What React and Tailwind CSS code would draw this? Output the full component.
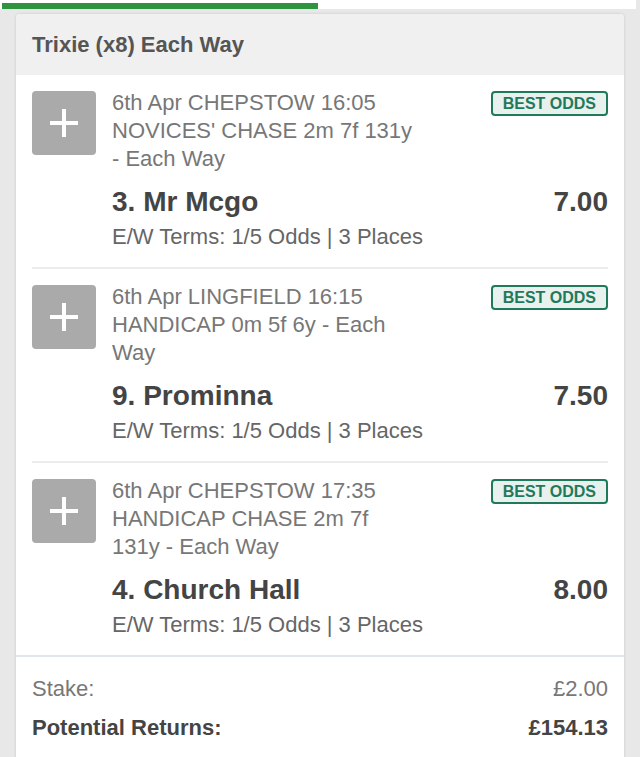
const bets = [
  {
    event: "6th Apr CHEPSTOW 16:05 NOVICES' CHASE 2m 7f 131y - Each Way",
    name: "3. Mr Mcgo",
    odds: "7.00",
  },
  {
    event: "6th Apr LINGFIELD 16:15 HANDICAP 0m 5f 6y - Each Way",
    name: "9. Prominna",
    odds: "7.50",
  },
  {
    event: "6th Apr CHEPSTOW 17:35 HANDICAP CHASE 2m 7f 131y - Each Way",
    name: "4. Church Hall",
    odds: "8.00",
  },
];

function PlusIcon() {
  return (
    <svg width="30" height="30" viewBox="0 0 30 30">
      <rect x="13" y="1" width="4" height="28" fill="#ffffff" />
      <rect x="1" y="13" width="28" height="4" fill="#ffffff" />
    </svg>
  );
}

function BetRow({ bet, last }) {
  return (
    <div className={`flex gap-4 pt-4 pb-[16px] ${last ? "" : "border-b-2 border-[#ececec]"}`}>
      <div className="w-16 h-16 shrink-0 rounded bg-[#aaaaaa] flex items-center justify-center">
        <PlusIcon />
      </div>
      <div className="flex-1 min-w-0">
        <div className="flex items-start justify-between -mt-[2px]">
          <p className="w-[302px] text-[22px] leading-[28px] text-[#777777]">{bet.event}</p>
          <span className="mt-[2px] shrink-0 border-2 border-[#1f7a5c] bg-[#e8f1ee] rounded text-[#1f7a5c] font-bold text-[16px] leading-[21px] px-[10px]">
            BEST ODDS
          </span>
        </div>
        <div className="flex items-center justify-between mt-[12px]">
          <span className="text-[28px] leading-[34px] font-bold text-[#444444]">{bet.name}</span>
          <span className="text-[28px] leading-[34px] font-bold text-[#444444]">{bet.odds}</span>
        </div>
        <p className="text-[22px] leading-[28px] text-[#666666] mt-[4px]">E/W Terms: 1/5 Odds | 3 Places</p>
      </div>
    </div>
  );
}

export default function App() {
  return (
    <div className="min-h-[757px] bg-[#e8e8e8] font-['Liberation_Sans',Arial,sans-serif] overflow-hidden">
      <div className="h-[9px] bg-white mr-1 relative">
        <div className="absolute left-[2px] top-[3px] h-[6px] w-[316px] bg-[#2f9440]" />
      </div>
      <div className="mx-4 mt-[5px] bg-white rounded-t shadow-[0_0_3px_rgba(0,0,0,0.15)]">
        <div className="bg-[#f0f0f0] rounded-t h-[61px] flex items-center px-4">
          <h1 className="text-[22px] font-bold text-[#555555]">Trixie (x8) Each Way</h1>
        </div>
        <div className="px-4">
          {bets.map((b, i) => (
            <BetRow key={i} bet={b} last={i === bets.length - 1} />
          ))}
        </div>
        <div className="border-t-2 border-[#e1e6ea] px-4 pt-[18px] pb-6">
          <div className="flex justify-between text-[22px] leading-[28px] text-[#777777]">
            <span>Stake:</span>
            <span>£2.00</span>
          </div>
          <div className="flex justify-between text-[22px] leading-[28px] font-bold text-[#444444] mt-[11px]">
            <span>Potential Returns:</span>
            <span>£154.13</span>
          </div>
        </div>
      </div>
    </div>
  );
}
